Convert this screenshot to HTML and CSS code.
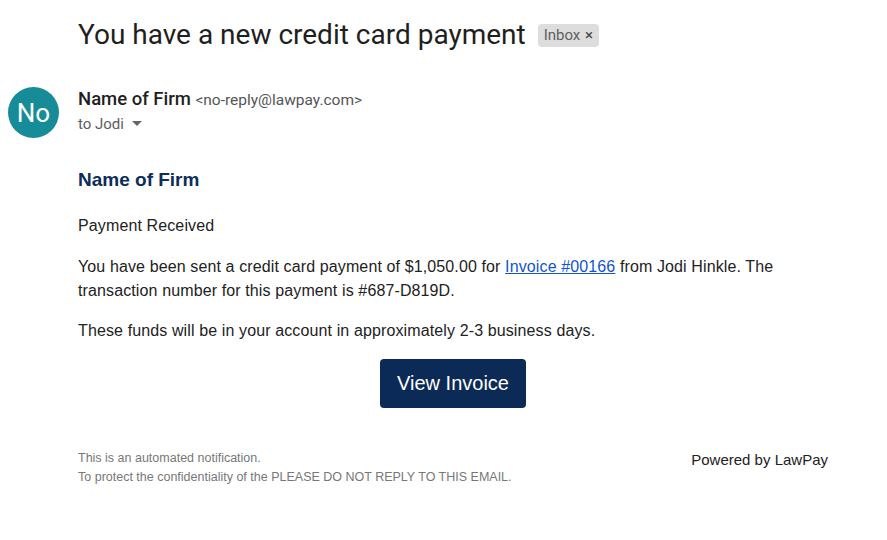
FILE: index.html
```
<!DOCTYPE html>
<html>
<head>
<meta charset="utf-8">
<link rel="stylesheet" href="styles.css">
</head>
<body>
<div class="page">
  <div class="subject-row">
    <h1 class="subject">You have a new credit card payment</h1>
    <span class="label">Inbox <span class="x">×</span></span>
  </div>
  <div class="header">
    <div class="avatar">No</div>
    <div class="sender">
      <div class="from"><span class="name">Name of Firm</span> <span class="addr">&lt;no-reply@lawpay.com&gt;</span></div>
      <div class="to">to Jodi <svg class="caret" width="10" height="6" viewBox="0 0 10 6"><path d="M0 0h10L5 5z" fill="#666"/></svg></div>
    </div>
  </div>
  <div class="body">
    <div class="firm">Name of Firm</div>
    <p class="p1">Payment Received</p>
    <p class="p2">You have been sent a credit card payment of $1,050.00 for <a href="#">Invoice #00166</a> from Jodi Hinkle. The transaction number for this payment is #687-D819D.</p>
    <p class="p3">These funds will be in your account in approximately 2-3 business days.</p>
    <div class="btn-row"><a class="btn" href="#">View Invoice</a></div>
    <div class="footer">
      <div class="notes">
        <div>This is an automated notification.</div>
        <div>To protect the confidentiality of the PLEASE DO NOT REPLY TO THIS EMAIL.</div>
      </div>
      <div class="powered">Powered by LawPay</div>
    </div>
  </div>
</div>
</body>
</html>
```
FILE: styles.css
```
html, body { margin: 0; padding: 0; background: #fff; }
body { font-family: "Liberation Sans", Arial, sans-serif; color: #222; }
.page { padding: 13px 59px 0 8px; }
.subject-row { display: flex; align-items: center; gap: 12px; padding-left: 70px; height: 42px; }
.subject { margin: 0; font-family: Roboto, "Open Sans", sans-serif; font-weight: 400; font-size: 28px; color: #1f1f1f; }
.label { background: #dddddd; color: #5f5f5f; font-family: Roboto, sans-serif; font-size: 15px; line-height: 19px; padding: 2px 6px 2px 6px; border-radius: 4px; margin-top: 2px; }
.label .x { margin-left: 1px; color: #444; }
.header { display: flex; gap: 20px; margin-top: 32px; }
.avatar { flex: none; width: 51px; height: 51px; border-radius: 50%; background: #178c99; color: #fff; font-family: Roboto, sans-serif; font-size: 26px; display: flex; align-items: center; justify-content: center; margin-left: 0; }
.sender { font-family: Roboto, sans-serif; margin-left: -1px; }
.from { font-size: 18px; line-height: 24px; }
.name { font-weight: 500; font-size: 18.5px; color: #1f1f1f; }
.addr { font-size: 15.5px; color: #555; }
.to { font-size: 15px; color: #5e5e5e; line-height: 20px; margin-top: 2px; display: flex; align-items: center; gap: 8px; }
.body { padding-left: 70px; margin-top: 30px; font-size: 16px; letter-spacing: 0.12px; }
.firm { color: #0d2d5b; font-weight: 700; font-size: 19px; line-height: 24px; letter-spacing: 0; }
p { margin: 0; line-height: 24px; }
.p1 { margin-top: 22px; }
.p2 { margin-top: 17px; }
.p3 { margin-top: 16px; }
a { color: #1155cc; }
.btn-row { display: flex; justify-content: center; margin-top: 16px; }
.btn { background: #0b2a56; color: #fff; text-decoration: none; font-size: 20px; letter-spacing: 0; border-radius: 4px; width: 146px; height: 49px; display: flex; align-items: center; justify-content: center; }
.footer { display: flex; justify-content: space-between; margin-top: 41px; }
.notes { font-size: 12.5px; color: #777; line-height: 19px; letter-spacing: 0; }
.powered { font-size: 15px; color: #222; line-height: 19px; margin-top: 1px; letter-spacing: 0; }
```
